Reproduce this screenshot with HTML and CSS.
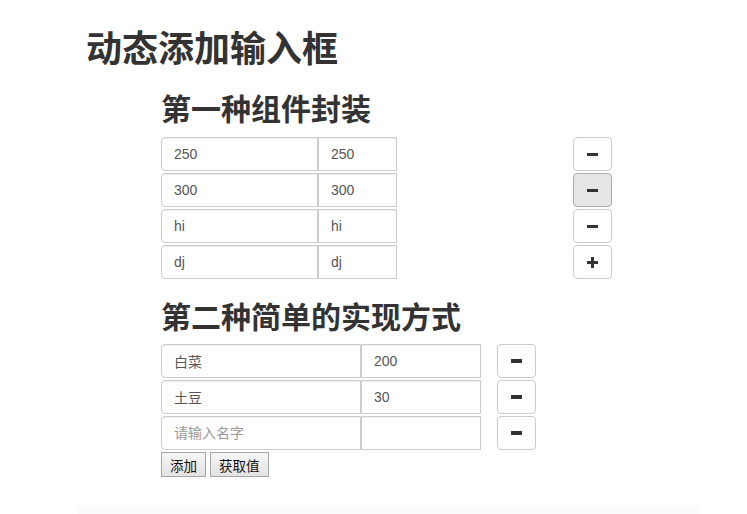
FILE: index.html
```html
<!DOCTYPE html>
<html lang="zh-CN">
<head>
<meta charset="utf-8">
<title>动态添加输入框</title>
<link rel="stylesheet" href="styles.css">
</head>
<body>
<div class="page">
  <h1 class="title">动态添加输入框</h1>
  <section class="sec sec-one">
    <h2 class="sub">第一种组件封装</h2>
    <div class="rows">
      <div class="row">
        <input class="inp a1" value="250"><input class="inp b1" value="250">
        <button class="icon-btn r1"><span class="minus"></span></button>
      </div>
      <div class="row">
        <input class="inp a1" value="300"><input class="inp b1" value="300">
        <button class="icon-btn r1 active"><span class="minus"></span></button>
      </div>
      <div class="row">
        <input class="inp a1" value="hi"><input class="inp b1" value="hi">
        <button class="icon-btn r1"><span class="minus"></span></button>
      </div>
      <div class="row">
        <input class="inp a1" value="dj"><input class="inp b1" value="dj">
        <button class="icon-btn r1"><span class="plus"></span></button>
      </div>
    </div>
  </section>
  <section class="sec sec-two">
    <h2 class="sub">第二种简单的实现方式</h2>
    <div class="rows">
      <div class="row">
        <input class="inp a2" value="白菜"><input class="inp b2" value="200">
        <button class="icon-btn r2"><span class="minus big"></span></button>
      </div>
      <div class="row">
        <input class="inp a2" value="土豆"><input class="inp b2" value="30">
        <button class="icon-btn r2"><span class="minus big"></span></button>
      </div>
      <div class="row">
        <input class="inp a2" placeholder="请输入名字"><input class="inp b2" value="">
        <button class="icon-btn r2"><span class="minus big"></span></button>
      </div>
    </div>
    <div class="actions">
      <button class="plain">添加</button><button class="plain">获取值</button>
    </div>
  </section>
  <div class="footer-line"></div>
</div>
</body>
</html>
```
FILE: styles.css
```css
html, body {
  margin: 0;
  padding: 0;
  background: #fff;
}
body {
  font-family: "Liberation Sans", "Noto Sans CJK SC", sans-serif;
  color: #333;
  width: 747px;
  height: 514px;
  overflow: hidden;
}
.page {
  padding: 26px 0 0 86px;
}
.title {
  margin: 0;
  font-family: "Noto Sans CJK SC", sans-serif;
  font-size: 36px;
  line-height: 40px;
  font-weight: 700;
  color: #333;
}
.sec {
  margin-left: 75px;
}
.sub {
  margin: 0;
  font-family: "Noto Sans CJK SC", sans-serif;
  font-size: 30px;
  line-height: 33px;
  font-weight: 700;
  color: #333;
}
.sec-one .sub {
  margin-top: 25px;
  margin-bottom: 13px;
}
.sec-two .sub {
  margin-top: 20px;
  margin-bottom: 12px;
}
.rows {
  display: flex;
  flex-direction: column;
  gap: 2px;
}
.row {
  display: flex;
  align-items: center;
  height: 34px;
}
.inp {
  box-sizing: border-box;
  height: 34px;
  margin: 0;
  padding: 6px 12px;
  border: 1px solid #ccc;
  font-family: "Liberation Sans", "Noto Sans CJK SC", sans-serif;
  font-size: 14px;
  color: #555;
  background: #fff;
  outline: none;
  box-shadow: inset 0 1px 1px rgba(0,0,0,0.075);
}
.inp::placeholder {
  color: #999;
}
.a1 {
  width: 157px;
  border-radius: 4px 0 0 4px;
}
.b1 {
  width: 79px;
  border-radius: 0;
}
.a2 {
  width: 200px;
  border-radius: 4px 0 0 4px;
}
.b2 {
  width: 120px;
  border-radius: 0;
}
.icon-btn {
  box-sizing: border-box;
  width: 39px;
  height: 34px;
  margin: 0;
  padding: 0;
  border: 1px solid #ccc;
  border-radius: 4px;
  background: #fff;
  display: flex;
  align-items: center;
  justify-content: center;
}
.icon-btn.active {
  background: #e6e6e6;
  border-color: #adadad;
}
.r1 {
  margin-left: 176px;
}
.r2 {
  margin-left: 16px;
}
.minus {
  display: block;
  width: 11px;
  height: 3px;
  background: #333;
}
.minus.big {
  width: 11px;
  height: 4px;
}
.plus {
  display: block;
  position: relative;
  width: 11px;
  height: 11px;
}
.plus::before, .plus::after {
  content: "";
  position: absolute;
  background: #333;
}
.plus::before {
  left: 0;
  top: 4px;
  width: 11px;
  height: 3px;
}
.plus::after {
  left: 4px;
  top: 0;
  width: 3px;
  height: 11px;
}
.actions {
  display: flex;
  gap: 4px;
  margin-top: 2px;
}
.plain {
  box-sizing: border-box;
  height: 25px;
  margin: 0;
  padding: 0 8px;
  border: 1px solid #a6a6a6;
  border-radius: 0;
  background: linear-gradient(#f6f6f6, #e3e3e3);
  font-family: "Noto Sans CJK SC", sans-serif;
  font-size: 13.5px;
  color: #111;
}
.footer-line {
  margin: 29px 0 0 -8px;
  width: 622px;
  height: 10px;
  background: #fbfbfb;
}
```
